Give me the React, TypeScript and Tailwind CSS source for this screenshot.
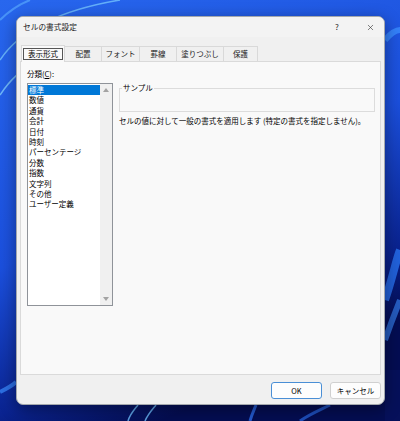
import { X } from "lucide-react";

const categories = [
  "標準",
  "数値",
  "通貨",
  "会計",
  "日付",
  "時刻",
  "パーセンテージ",
  "分数",
  "指数",
  "文字列",
  "その他",
  "ユーザー定義",
];

const tabs = [
  { label: "配置", width: "w-[38px]" },
  { label: "フォント", width: "w-[39px]" },
  { label: "罫線", width: "w-[38px]" },
  { label: "塗りつぶし", width: "w-[48px]" },
  { label: "保護", width: "w-[35px]" },
];

function Wallpaper() {
  return (
    <svg className="absolute inset-0" width="400" height="421" viewBox="0 0 400 421">
      <defs>
        <linearGradient id="base" x1="0" y1="0" x2="0.4" y2="1">
          <stop offset="0" stopColor="#2867ee" />
          <stop offset="0.55" stopColor="#1b4fdc" />
          <stop offset="0.85" stopColor="#0a2390" />
          <stop offset="1" stopColor="#040d52" />
        </linearGradient>
      </defs>
      <rect width="400" height="421" fill="url(#base)" />
      <path d="M0 60 C 20 30, 60 10, 120 0" stroke="#7fd0ff" strokeWidth="1.5" fill="none" opacity="0.7" />
      <path d="M0 95 C 10 80, 20 70, 40 60" stroke="#8fdcff" strokeWidth="1.5" fill="none" opacity="0.7" />
      <path d="M0 20 C 10 10, 20 4, 30 0" stroke="#5fb0ff" strokeWidth="2" fill="none" opacity="0.6" />
      <path d="M385 40 C 392 32, 396 30, 400 30" stroke="#3a8cff" strokeWidth="6" fill="none" opacity="0.8" />
      <path d="M385 300 C 392 280, 396 260, 400 250" stroke="#2c7dff" strokeWidth="8" fill="none" opacity="0.7" />
      <path d="M385 340 C 392 320, 396 310, 400 300" stroke="#3b8cff" strokeWidth="6" fill="none" opacity="0.6" />
      <rect x="385" y="370" width="15" height="51" fill="#06105a" />
      <path d="M0 392 C 8 388, 14 384, 16 382" stroke="#3a8cff" strokeWidth="4" fill="none" opacity="0.7" />
      <path d="M128 421 C 130 414, 134 410, 138 405" stroke="#6fc0ff" strokeWidth="1.5" fill="none" opacity="0.8" />
      <path d="M145 421 C 148 414, 152 410, 156 405" stroke="#6fc0ff" strokeWidth="1.5" fill="none" opacity="0.8" />
      <path d="M250 421 C 252 414, 254 410, 256 405" stroke="#2f78ff" strokeWidth="3" fill="none" opacity="0.7" />
      <path d="M300 421 C 310 414, 320 410, 330 405" stroke="#2f78ff" strokeWidth="3" fill="none" opacity="0.6" />
    </svg>
  );
}

export default function App() {
  return (
    <div className="relative w-[400px] h-[421px] overflow-hidden pt-[16px] pl-[16px] font-['Noto_Sans_CJK_JP',sans-serif] text-black">
      <Wallpaper />

      <div className="relative flex flex-col w-[369px] h-[389px] rounded-[7px] border border-[#a4a8ad] bg-[#f0f0f0] shadow-[0_4px_16px_rgba(0,0,0,0.4)] overflow-hidden">
        {/* Title bar */}
        <div className="flex items-center h-[20px] bg-[#f3f3f3]">
          <span className="pl-[6px] text-[7.7px] leading-[10px] text-[#1a1a1a]">セルの書式設定</span>
          <div className="ml-auto flex items-center">
            <span className="w-[28px] mr-[5px] text-center text-[8px] leading-[10px] text-[#222]">?</span>
            <span className="w-[28px] flex justify-center">
              <X className="w-[9px] h-[9px] text-[#333]" strokeWidth={1.6} />
            </span>
          </div>
        </div>

        {/* Tabs */}
        <div className="flex items-end h-[17px] mt-[7px] ml-[4px]">
          <div className="relative z-10 -mb-px flex items-center justify-center w-[44px] h-[17px] border border-b-0 border-[#d9d9d9] bg-[#f9f9f9]">
            <span className="flex items-center justify-center w-[40px] h-[12px] border border-[#555] text-[7.5px] leading-[10px]">
              表示形式
            </span>
          </div>
          {tabs.map((t) => (
            <div
              key={t.label}
              className={`${t.width} flex items-center justify-center h-[15px] -ml-px border border-b-0 border-[#d9d9d9] bg-[#f0f0f0] text-[7.5px] leading-[10px] text-[#222]`}
            >
              {t.label}
            </div>
          ))}
        </div>

        {/* Panel */}
        <div className="flex h-[314px] mx-[3px] border border-[#dadada] bg-[#f9f9f9] pl-[6px] pt-[7px]">
          <div className="flex flex-col">
            <span className="h-[10px] text-[7.5px] leading-[10px]">
              分類(<span className="underline">C</span>):
            </span>
            <div className="flex mt-[4px] w-[86px] h-[223px] border border-[#8f9399] bg-white">
              <div className="flex-1 pt-px">
                {categories.map((c, i) => (
                  <div
                    key={c}
                    className={`h-[10.4px] pl-[1px] text-[7.5px] leading-[10.4px] whitespace-nowrap ${
                      i === 0 ? "bg-[#0078d7] text-white" : ""
                    }`}
                  >
                    {c}
                  </div>
                ))}
              </div>
              <div className="flex flex-col justify-between items-center w-[12px] bg-[#f0f0f0] py-[4px]">
                <svg width="6" height="4" viewBox="0 0 6 4">
                  <path d="M0 4 L3 0 L6 4 Z" fill="#a3a3a3" />
                </svg>
                <svg width="6" height="4" viewBox="0 0 6 4">
                  <path d="M0 0 L6 0 L3 4 Z" fill="#a3a3a3" />
                </svg>
              </div>
            </div>
          </div>

          <div className="flex flex-col w-[256px] ml-[6px] mt-[19px]">
            <div className="relative h-[24px] border border-[#dcdcdc]">
              <span className="absolute -top-[6px] left-[2px] px-[1px] bg-[#f9f9f9] text-[7.5px] leading-[10px]">サンプル</span>
            </div>
            <p className="mt-[4px] text-[7.5px] leading-[10px] whitespace-nowrap">
              セルの値に対して一般の書式を適用します (特定の書式を指定しません)。
            </p>
          </div>
        </div>

        {/* Footer */}
        <div className="flex justify-end gap-[8px] pr-[3px] pt-[7px]">
          <button className="w-[51px] h-[17px] rounded-[3px] border border-[#4a8fd6] bg-[#fdfdfd] text-[7.5px] leading-[10px]">
            OK
          </button>
          <button className="w-[51px] h-[17px] rounded-[3px] border border-[#d0d0d0] bg-[#fdfdfd] text-[7.5px] leading-[10px]">
            キャンセル
          </button>
        </div>
      </div>
    </div>
  );
}
